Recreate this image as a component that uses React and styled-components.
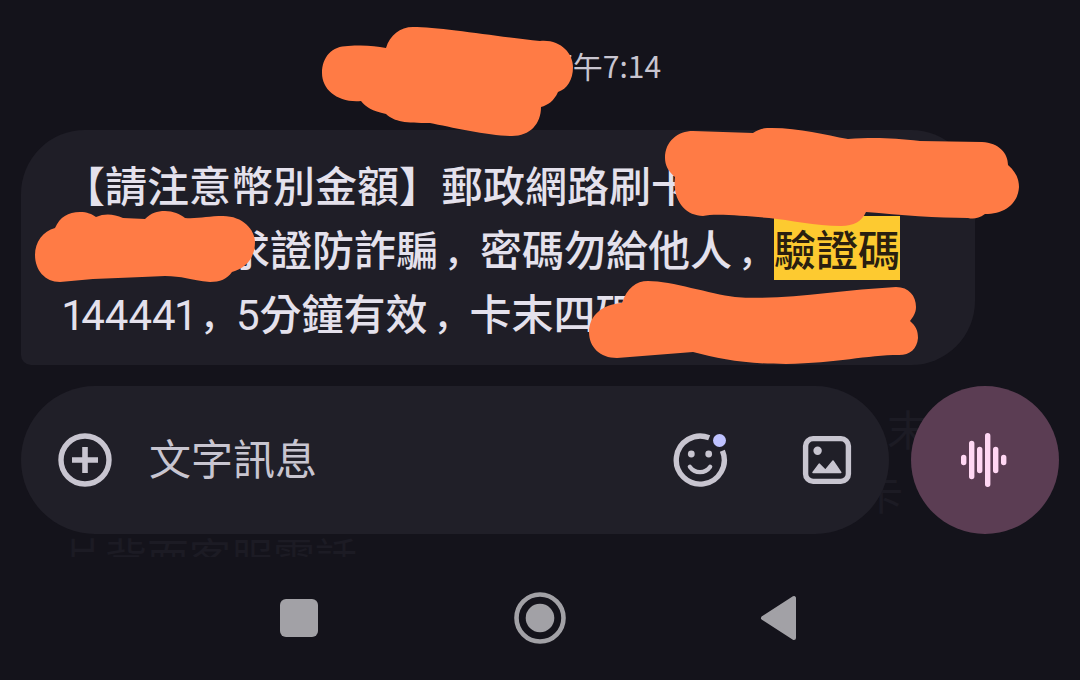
import React from "react";
import styled, { createGlobalStyle } from "styled-components";

const GlobalStyle = createGlobalStyle`
  * { box-sizing: border-box; }
  html { background: #14131b; }
  body {
    margin: 0;
    background: #14131b;
    color: #e4e1ec;
    font-family: "Noto Sans CJK TC", "Noto Sans", sans-serif;
    font-variant-numeric: proportional-nums;
  }
`;

const Screen = styled.div`
  display: flex;
  flex-direction: column;
  min-height: 100vh;
  overflow: hidden;
`;

const Thread = styled.main`
  position: relative;
  display: flex;
  flex-direction: column;
  gap: 45px;
  padding: 45px 21px 21px;
`;

const Timestamp = styled.time`
  align-self: center;
  font-size: 30px;
  line-height: 40px;
  color: #c8c5d0;
  white-space: nowrap;
`;

const Bubble = styled.article`
  align-self: flex-start;
  width: calc(100% - 84px);
  padding: 22px 42px 21px;
  border-radius: 64px 64px 64px 10px;
  background: #1f1e27;
`;

const Line = styled.p`
  height: 64px;
  margin: 0;
  font-size: 42px;
  font-weight: ${(p) => p.$weight || 400};
  line-height: 64px;
  white-space: nowrap;
`;

const Hidden = styled.span`
  display: inline-block;
  width: ${(p) => p.$width}px;
`;

const Digits = styled.span`
  font-family: Roboto, "Noto Sans CJK TC", sans-serif;
  font-weight: 400;
`;

const Comma = styled.span`
  display: inline-block;
  width: 42px;
  padding-left: 6px;
  font-family: "Noto Sans CJK SC", sans-serif;
  font-size: 36px;
`;

const Code = styled.mark`
  display: inline-block;
  height: 64px;
  background: #fdca30;
  color: #2a1f10;
`;

const Ink = styled.svg`
  position: absolute;
  left: 0;
  top: 0;
  width: 1080px;
  height: 386px;
  pointer-events: none;
  fill: #ff7b45;
`;

const Footer = styled.footer`
  position: relative;
`;

const Faded = styled.div`
  position: absolute;
  top: 10px;
  left: 63px;
  right: 0;
  height: 161px;
  overflow: hidden;
  color: #1c1b24;
`;

const ComposeRow = styled.form`
  position: relative;
  display: flex;
  gap: 22px;
  padding: 0 21px;
`;

const Composer = styled.div`
  display: flex;
  flex: 1;
  min-width: 0;
  align-items: center;
  gap: 36px;
  height: 148px;
  padding: 0 34px 0 36px;
  border-radius: 74px;
  background: #201f28;
`;

const MessageInput = styled.input`
  flex: 1;
  min-width: 0;
  height: 72px;
  padding: 0 0 8px;
  border: 0;
  outline: 0;
  background: transparent;
  color: #e4e1ec;
  font: inherit;
  font-size: 42px;
  &::placeholder {
    color: #c8c5d0;
    opacity: 1;
  }
`;

const Tools = styled.div`
  display: flex;
  gap: 71px;
`;

const IconButton = styled.button`
  display: flex;
  flex: none;
  align-items: center;
  justify-content: center;
  width: 56px;
  height: 56px;
  padding: 0;
  border: 0;
  background: none;
  color: ${(p) => p.$color || "#c8c5d0"};
  cursor: pointer;
`;

const VoiceButton = styled(IconButton)`
  width: 148px;
  height: 148px;
  border-radius: 50%;
  background: #5b3d53;
`;

const NavBar = styled.nav`
  display: flex;
  justify-content: space-around;
  width: 67%;
  margin: 0 auto;
  padding: 56px 0 32px;
`;

const PlusIcon = () => (
  <svg width="56" height="56" viewBox="0 0 56 56" fill="none" stroke="currentColor">
    <circle cx="28" cy="28" r="24" strokeWidth="5.4" />
    <path d="M28 15v26M15 28h26" strokeWidth="5.6" />
  </svg>
);

const SmileIcon = () => (
  <svg width="56" height="56" viewBox="0 0 56 56" fill="none" stroke="currentColor">
    <path d="M37.2 5.8A24 24 0 1 0 50.4 18.8" strokeWidth="5.4" />
    <circle cx="19.3" cy="22" r="3.4" fill="currentColor" stroke="none" />
    <circle cx="36.7" cy="22" r="3.4" fill="currentColor" stroke="none" />
    <path d="M17.8 34.8c5 7.2 15.4 7.2 20.4 0" strokeWidth="4.2" strokeLinecap="round" />
    <circle cx="47.5" cy="8.5" r="6.5" fill="#bfc2ff" stroke="none" />
  </svg>
);

const PhotoIcon = () => (
  <svg width="56" height="56" viewBox="0 0 56 56" fill="none" stroke="currentColor">
    <rect x="6.6" y="6.6" width="42.8" height="42.8" rx="7.5" strokeWidth="5.4" />
    <circle cx="18.6" cy="18.7" r="4.2" fill="currentColor" stroke="none" />
    <path d="M14 40.5l6.2-8.4 6.2 6.2 7.6-9.3 7.8 11.5z" fill="currentColor" strokeWidth="1.5" strokeLinejoin="round" />
  </svg>
);

const WaveIcon = () => (
  <svg width="56" height="56" viewBox="0 0 56 56" stroke="currentColor" strokeWidth="5.4" strokeLinecap="round">
    <path d="M6.7 25.5v5M14.7 11.5v33M22.7 17.5v21M30.7 3.7v48.6M38.7 17.5v21M46.7 25.5v5" />
  </svg>
);

const RecentsIcon = () => (
  <svg width="56" height="56" viewBox="0 0 56 56" fill="currentColor">
    <rect x="9" y="9" width="38" height="38" rx="6" />
  </svg>
);

const HomeIcon = () => (
  <svg width="56" height="56" viewBox="0 0 56 56" fill="currentColor">
    <circle cx="28" cy="28" r="23.5" fill="none" stroke="currentColor" strokeWidth="4.6" />
    <circle cx="28" cy="28" r="14.3" />
  </svg>
);

const BackIcon = () => (
  <svg width="56" height="56" viewBox="0 0 56 56" fill="currentColor" stroke="currentColor" strokeWidth="4" strokeLinejoin="round">
    <path d="M10 28L41 8v40z" />
  </svg>
);

const inkBlots = [
  "M322 73C322 57 332 46 348 46C365 45 375 46 386 48C390 35 400 27 413 27C440 27 500 37 540 41C560 39 573 53 573 67C573 80 567 89 558 92C554 101 548 105 541 107C541 124 530 136 512 136C490 136 450 127 430 123C405 123 395 122 386 114C372 111 366 107 361 101C338 103 322 90 322 73Z",
  "M35 255C35 242 43 231 55 228C60 217 68 212 80 212C87 212 92 214 96 217C105 213 114 214 123 218L145 219C151 213 157 211 165 211C173 211 180 214 185 218C198 219 208 216 223 216C243 216 255 230 255 242C255 258 246 268 232 272C227 279 220 282 210 282C190 280 182 276 165 276C143 277 118 278 93 279L60 282C45 282 35 270 35 255Z",
  "M665 158C665 141 678 131 693 131L753 133C760 128 766 128 772 128C800 128 825 135 848 139C875 137 893 138 920 141L982 142C999 143 1008 153 1008 165C1016 172 1019 179 1019 187C1018 204 1004 214 985 214C978 219 973 219 968 218C938 218 900 215 866 212C862 221 854 226 841 226C815 226 790 220 769 218C745 216 715 213 703 216C686 216 672 201 675 177C668 171 665 165 665 158Z",
  "M589 332C589 316 602 304 622 303C627 288 636 281 648 281C672 281 710 294 735 297C780 301 840 290 896 287C909 287 916 296 916 307C916 313 913 317 910 321C916 326 918 331 918 338C917 349 910 355 899 355C867 355 837 363 786 364C745 364 720 359 693 352L617 358C600 358 589 347 589 332Z",
];

export default function App() {
  return (
    <Screen>
      <GlobalStyle />
      <Thread>
        <Timestamp>
          <Hidden $width={124} />
          下午7:14
        </Timestamp>
        <Bubble>
          <Line $weight={500}>【請注意幣別金額】郵政網路刷卡</Line>
          <Line $weight={500}>
            <Hidden $width={165} />
            求證防詐騙<Comma>，</Comma>密碼勿給他人<Comma>，</Comma>
            <Code>驗證碼</Code>
          </Line>
          <Line $weight={500}>
            <Digits>144441</Digits>
            <Comma>，</Comma>
            <Digits>5</Digits>分鐘有效<Comma>，</Comma>卡末四碼
          </Line>
        </Bubble>
        <Ink viewBox="0 0 1080 386" aria-hidden="true">
          {inkBlots.map((d) => (
            <path key={d} d={d} />
          ))}
        </Ink>
      </Thread>
      <Footer>
        <Faded aria-hidden="true">
          <Line>
            <Hidden $width={824} />末
          </Line>
          <Line>
            <Hidden $width={798} />卡
          </Line>
          <Line>片背面客服電話</Line>
        </Faded>
        <ComposeRow onSubmit={(e) => e.preventDefault()}>
          <Composer>
            <IconButton type="button" aria-label="新增">
              <PlusIcon />
            </IconButton>
            <MessageInput type="text" placeholder="文字訊息" aria-label="文字訊息" />
            <Tools>
              <IconButton type="button" aria-label="表情符號">
                <SmileIcon />
              </IconButton>
              <IconButton type="button" aria-label="圖片">
                <PhotoIcon />
              </IconButton>
            </Tools>
          </Composer>
          <VoiceButton type="button" aria-label="語音" $color="#ffd7f3">
            <WaveIcon />
          </VoiceButton>
        </ComposeRow>
        <NavBar>
          <IconButton type="button" aria-label="最近" $color="#a2a1a6">
            <RecentsIcon />
          </IconButton>
          <IconButton type="button" aria-label="主畫面" $color="#a2a1a6">
            <HomeIcon />
          </IconButton>
          <IconButton type="button" aria-label="返回" $color="#a2a1a6">
            <BackIcon />
          </IconButton>
        </NavBar>
      </Footer>
    </Screen>
  );
}
